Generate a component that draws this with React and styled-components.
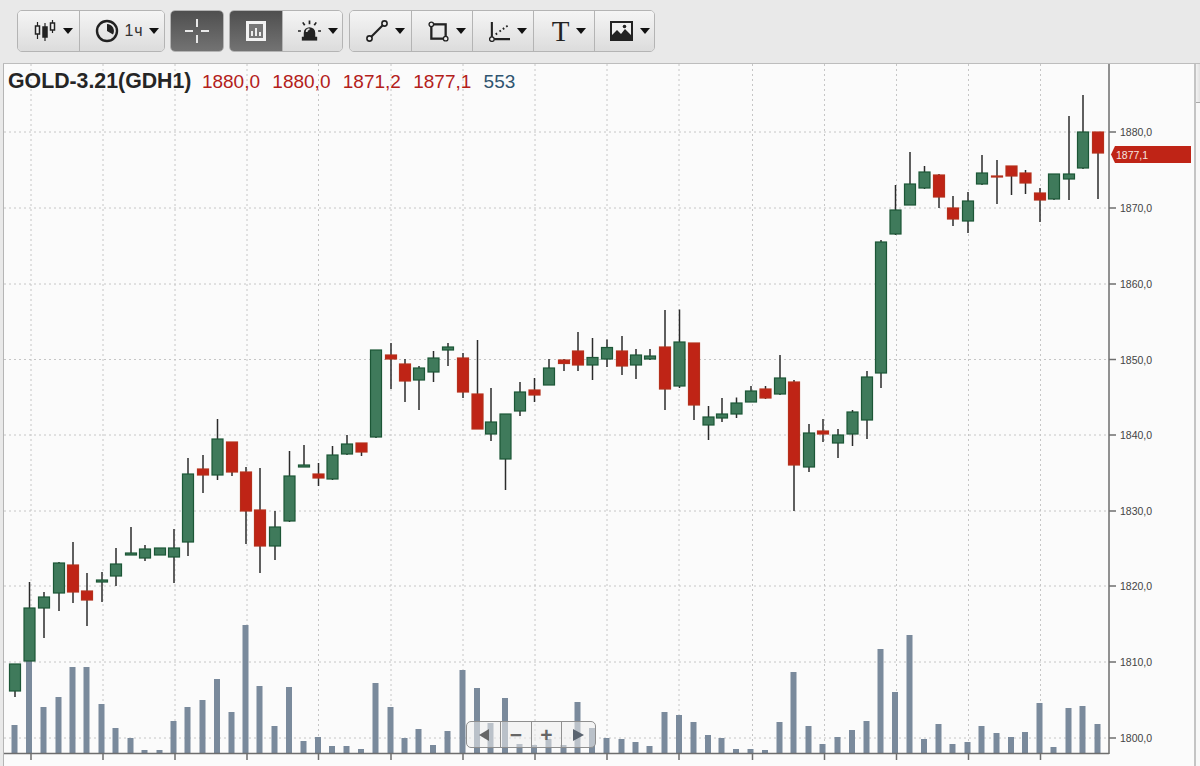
import styled, { createGlobalStyle } from "styled-components"

const GlobalStyle = createGlobalStyle`
  html, body { margin: 0; padding: 0; background: #e9e9e9; }
  body { font-family: "Liberation Sans", Arial, sans-serif; }
`

// x, wick top, wick bottom, body top, body bottom, up?
const candles = [
  [15, 664, 697, 664, 691, 1], [29.5, 582, 661, 608, 661, 1], [44, 592, 638, 597, 608, 1], [59, 562, 611, 563, 593, 1],
  [73, 542, 603, 565, 592, 0], [87, 573, 626, 591, 600, 0], [102, 572, 602, 580, 582, 1], [116, 548, 586, 564, 576, 1],
  [131, 527, 555, 553, 555, 1], [145, 545, 561, 549, 558, 1], [160, 548, 555, 548, 555, 1], [174, 529, 583, 548, 557, 1],
  [188, 458, 556, 474, 542, 1], [203, 455, 493, 469, 475, 0], [217.5, 419, 480, 439, 475, 1], [232, 442, 476, 442, 472, 0],
  [246, 467, 544, 472, 511, 0], [260, 468, 573, 510, 546, 0], [275, 511, 560, 527, 546, 1], [289.5, 451, 522, 476, 521, 1],
  [304, 445, 467, 465, 467, 1], [318.5, 463, 486, 474, 478, 0], [332.5, 446, 480, 455, 479, 1], [347, 435, 455, 444, 454, 1],
  [361.5, 443, 456, 443, 452, 0], [376, 350, 438, 350, 437, 1], [391, 343, 389, 355, 359, 0], [405, 359, 402, 364, 381, 0],
  [419, 366, 410, 368, 380, 1], [433.5, 351, 382, 358, 372, 1], [448, 343, 366, 347, 350, 1], [463, 353, 398, 358, 392, 0],
  [477.5, 340, 429, 394, 429, 0], [491, 388, 441, 422, 434, 1], [505.5, 414, 490, 414, 459, 1], [520, 382, 416, 392, 411, 1],
  [534.5, 378, 402, 390, 395, 0], [549, 359, 385, 368, 385, 1], [564, 359, 371, 360, 363.5, 0], [578, 332, 371, 351, 365, 0],
  [592.5, 338, 380, 357.5, 365, 1], [607, 339.5, 367, 347.5, 359, 1], [622, 336, 375, 351, 366, 0], [636, 349, 379, 355, 365, 1],
  [650, 349, 360, 356, 359, 1], [665, 310, 410, 347, 389, 0], [679.5, 309.5, 388, 342, 386, 1], [694, 343, 420, 343, 405, 0],
  [708.5, 406, 440, 417, 425, 1], [722, 398, 422, 414, 418, 1], [736.5, 397.5, 418, 403, 414, 1], [751, 386, 402, 391, 402, 1],
  [765.5, 386, 399, 389, 398, 0], [780, 355, 395, 378, 394, 1], [794, 380, 511, 382, 465, 0], [809, 424, 472, 433, 467, 1],
  [823, 419, 442, 431, 434, 0], [838, 429, 458, 435, 443, 1], [852.5, 410, 446, 412, 434, 1], [867, 371, 439, 377, 420, 1],
  [881, 240, 388, 242, 373, 1], [895.5, 185, 235, 210, 234, 1], [910, 152, 205, 184, 205, 1], [924.5, 166, 189, 172, 188, 1],
  [939, 174, 208, 175, 197, 0], [953, 196, 226, 208, 219, 0], [968, 192, 233, 201, 221, 1], [982, 155, 185, 173, 184, 1],
  [997, 160, 204, 176, 177, 0], [1011.5, 166, 195, 166, 176, 0], [1025.5, 170, 194, 173, 183, 0], [1040, 188, 222, 193, 200, 0],
  [1054, 174, 200, 174, 199, 1], [1069, 116, 200, 174, 179, 1], [1083, 95, 169, 132, 168, 1], [1098, 132, 199, 132, 153, 0],
]

const volumes = [
  725, 660, 707, 697, 667, 667, 704, 728, 738, 750, 750, 721, 707, 700, 679, 712, 625, 686, 726, 687,
  741, 737, 746, 746, 749, 683, 707, 738, 729, 745, 731, 670, 688, 723, 698, 744, 745, 739, 745, 702,
  728, 738, 739, 742, 746, 712, 715, 722, 735, 738, 749, 749, 750, 722, 672, 726, 744, 737, 730, 721,
  649, 692, 635, 739, 724, 744, 742, 726, 733, 737, 732, 703, 747, 708, 706, 724,
]

const priceLevels = [
  [132, "1880,0"], [208, "1870,0"], [284, "1860,0"], [359.5, "1850,0"], [435, "1840,0"],
  [511, "1830,0"], [586, "1820,0"], [662, "1810,0"], [738, "1800,0"],
]

const timeLines = [31, 103, 175, 247, 318.5, 391, 463, 535, 607, 679, 752.5, 824.5, 896.5, 968.5, 1040.5]

const Page = styled.div`
  width: 1200px;
  height: 766px;
  overflow: hidden;
  display: flex;
  flex-direction: column;
`
const Toolbar = styled.div`
  height: 63px;
  box-sizing: border-box;
  padding: 10px 0 0 17px;
  display: flex;
  align-items: flex-start;
  background: #e9e9e9;
`
const Group = styled.div`
  display: flex;
  height: 42px;
  box-sizing: border-box;
  margin-right: ${(p) => p.$gap || 5}px;
  border: 1px solid #b4b4b4;
  border-radius: 5px;
  overflow: hidden;
`
const ToolButton = styled.div`
  width: ${(p) => p.$w}px;
  box-sizing: border-box;
  padding-left: ${(p) => (p.$dark ? 0 : 10)}px;
  display: flex;
  align-items: center;
  justify-content: center;
  gap: ${(p) => p.$spread || 7}px;
  color: #333;
  background: ${(p) => (p.$dark
    ? "linear-gradient(#4f4f4f, #737373)"
    : "linear-gradient(#f5f5f5, #dcdcdc)")};
  & + & { border-left: 1px solid #b4b4b4; }
`
const Caret = styled.span`
  width: 0;
  height: 0;
  border-left: 5.5px solid transparent;
  border-right: 5.5px solid transparent;
  border-top: 6px solid #111;
`
const Period = styled.span`
  font-size: 16px;
  letter-spacing: 1px;
  color: #333;
`
const SerifT = styled.span`
  font-family: "Liberation Serif", serif;
  font-size: 29px;
  line-height: 30px;
  color: #222;
`
const Workspace = styled.div`
  flex: 1;
  display: flex;
  margin-left: 3px;
  border-top: 1px solid #bdbdbd;
`
const ChartPanel = styled.div`
  position: relative;
  width: 1190px;
  background: #fbfbfb;
  border-left: 1px solid #b5b5b5;
  border-right: 2px solid #c4c4c4;
`
const ChartSvg = styled.svg`
  display: block;
`
const Gutter = styled.div`
  flex: 1;
  background: #f8f8f8;
`
const GutterThumb = styled.div`
  height: 39px;
  box-sizing: border-box;
  background: linear-gradient(90deg, #f2f2f2, #e2e2e2);
  border-bottom: 1px solid #a8a8a8;
`
const Legend = styled.div`
  position: absolute;
  left: 4px;
  top: 6px;
  display: flex;
  align-items: baseline;
  font-size: 19px;
  line-height: 22px;
`
const Symbol = styled.span`
  font-weight: bold;
  font-size: 21.3px;
  color: #252525;
  margin-right: 10.5px;
`
const Quote = styled.span`
  color: ${(p) => p.$color || "#b3201a"};
  margin-right: 12.3px;
`
const Navigator = styled.div`
  position: absolute;
  left: 462px;
  top: 657px;
  width: 130px;
  height: 27px;
  box-sizing: border-box;
  display: flex;
  border: 1px solid #8f8f8f;
  border-radius: 5px;
  background: rgba(238, 238, 238, 0.55);
`
const NavCell = styled.div`
  width: ${(p) => p.$w}px;
  box-sizing: border-box;
  display: flex;
  align-items: center;
  justify-content: center;
  font-weight: bold;
  font-size: 21px;
  color: #666;
  & + & { border-left: 1px solid #8f8f8f; }
`
const ArrowLeft = styled.span`
  width: 0;
  height: 0;
  border-top: 6px solid transparent;
  border-bottom: 6px solid transparent;
  border-right: 10px solid #666;
`
const ArrowRight = styled.span`
  width: 0;
  height: 0;
  border-top: 6px solid transparent;
  border-bottom: 6px solid transparent;
  border-left: 11px solid #5a6470;
`

const CandlesIcon = () => (
  <svg width="22" height="22" viewBox="0 0 22 22" fill="none" stroke="#222">
    <path d="M3.500 2v17M11 3v18M18.500 0v13" strokeWidth="1.200" />
    <rect x="1.500" y="6" width="4" height="8" fill="#f2f2f2" strokeWidth="1.500" />
    <rect x="9" y="7" width="4" height="10" fill="#222" strokeWidth="1.500" />
    <rect x="16.500" y="3" width="4" height="7" fill="#f2f2f2" strokeWidth="1.500" />
  </svg>
)
const ClockIcon = () => (
  <svg width="24" height="24" viewBox="0 0 24 24" fill="none">
    <circle cx="12" cy="12" r="10" stroke="#222" strokeWidth="2.400" />
    <path d="M12 12V5a7 7 0 0 1 6 10.500z" fill="#222" />
  </svg>
)
const CrossIcon = () => (
  <svg width="24" height="24" viewBox="0 0 24 24" stroke="#e8e8e8" strokeWidth="2">
    <path d="M12 0v8M12 16v8M0 12h8M16 12h8" />
  </svg>
)
const BarsIcon = () => (
  <svg width="20" height="20" viewBox="0 0 20 20">
    <rect x="0" y="0" width="20" height="20" fill="#f2f2f2" />
    <rect x="3" y="3" width="14" height="14" fill="#777" />
    <path d="M5 15V10h2v5zM9 15V7h2v8zM13 15V11h2v4z" fill="#eee" />
  </svg>
)
const AlarmIcon = () => (
  <svg width="23" height="22" viewBox="0 0 24 22" fill="#222">
    <path d="M6 20V13a6 6 0 0 1 12 0v7z" />
    <rect x="4" y="17" width="16" height="4" />
    <path d="M9 12a3 3 0 0 1 3-3" stroke="#ddd" strokeWidth="1.800" fill="none" />
    <path d="M12 0v4M5 2l2 3M19 2l-2 3M0 11h3M21 11h3" stroke="#222" strokeWidth="1.800" />
  </svg>
)
const LineIcon = () => (
  <svg width="22" height="22" viewBox="0 0 22 22" fill="#eee" stroke="#222" strokeWidth="1.600">
    <path d="M4 18L18 4" strokeWidth="2.200" />
    <circle cx="3.500" cy="18.500" r="2.600" />
    <circle cx="18.500" cy="3.500" r="2.600" />
  </svg>
)
const RectIcon = () => (
  <svg width="21" height="21" viewBox="0 0 22 22" fill="none" stroke="#222" strokeWidth="2.400">
    <rect x="3.500" y="3.500" width="15" height="15" />
    <circle cx="3.500" cy="3.500" r="2.400" fill="#eee" strokeWidth="1.400" />
    <circle cx="18.500" cy="18.500" r="2.400" fill="#eee" strokeWidth="1.400" />
  </svg>
)
const FibIcon = () => (
  <svg width="21" height="21" viewBox="0 0 22 22" fill="none" stroke="#222">
    <path d="M3 1v17M5 19h17" strokeWidth="2.200" />
    <circle cx="3" cy="19" r="2.400" fill="#eee" strokeWidth="1.400" />
    <path d="M7 14l1.500-1M11 11l1.500-1M14.500 8.500L16 7.500M18 6l1.500-1" strokeWidth="2" />
  </svg>
)
const ImageIcon = () => (
  <svg width="23" height="20" viewBox="0 0 23 20">
    <rect x="0" y="0" width="23" height="20" fill="#222" />
    <rect x="2" y="2" width="19" height="12" fill="#eee" />
    <path d="M2 14l5-5 4 4 4-5 6 6v3H2z" fill="#222" />
    <circle cx="14.500" cy="5.500" r="1.800" fill="#222" />
  </svg>
)

const Candle = ({ c }) => {
  const [x, top, bottom, bodyTop, bodyBottom, up] = c
  const fill = up ? "#3f7a5b" : "#bf2416"
  const edge = up ? "#1c5636" : "#b5301c"
  return (
    <g>
      <line x1={x} x2={x} y1={top} y2={bottom} stroke="#2b2b2b" strokeWidth="1.500" />
      <rect x={x - 5.5} y={bodyTop} width="11" height={Math.max(bodyBottom - bodyTop, 1)} fill={fill} stroke={edge} strokeWidth="1.200" />
    </g>
  )
}

const PriceChart = () => (
  <ChartSvg width="1187" height="702" viewBox="4 64 1187 702">
    <g stroke="#c6c6c6" strokeWidth="1" strokeDasharray="2 3">
      {timeLines.map((x) => <line key={x} x1={x} x2={x} y1="64" y2="753" />)}
      {priceLevels.map(([y]) => <line key={y} x1="4" x2="1109" y1={y} y2={y} />)}
    </g>
    {volumes.map((top, i) => (
      <rect key={i} x={candles[i][0] - 3.5} y={top} width="6" height={753 - top} fill="#7a8a9c" />
    ))}
    {candles.map((c) => <Candle key={c[0]} c={c} />)}
    <g stroke="#6e6e6e" strokeWidth="1.500">
      <line x1="1109" x2="1109" y1="64" y2="754" />
      <line x1="4" x2="1109" y1="753.500" y2="753.500" />
      {timeLines.map((x) => <line key={x} x1={x} x2={x} y1="753" y2="760" />)}
      {priceLevels.map(([y]) => <line key={y} x1="1109" x2="1116" y1={y} y2={y} />)}
    </g>
    <g fontFamily="Liberation Sans, Arial, sans-serif" fontSize="10.500" fill="#444">
      {priceLevels.map(([y, label]) => <text key={y} x="1120" y={y + 4}>{label}</text>)}
    </g>
    <path d="M1115 146H1191V163H1115L1111 154.500Z" fill="#bf2416" />
    <text x="1116" y="158.500" fontFamily="Liberation Sans, Arial, sans-serif" fontSize="10.500" fill="#f6e6e0">1877,1</text>
  </ChartSvg>
)

const App = () => {
  return (
    <Page>
      <GlobalStyle />
      <Toolbar>
        <Group>
          <ToolButton $w={61}><CandlesIcon /><Caret /></ToolButton>
          <ToolButton $w={85} $spread={5}><ClockIcon /><Period>1ч</Period><Caret /></ToolButton>
        </Group>
        <Group>
          <ToolButton $w={52} $dark><CrossIcon /></ToolButton>
        </Group>
        <Group $gap={6}>
          <ToolButton $w={52} $dark><BarsIcon /></ToolButton>
          <ToolButton $w={60}><AlarmIcon /><Caret /></ToolButton>
        </Group>
        <Group>
          <ToolButton $w={61}><LineIcon /><Caret /></ToolButton>
          <ToolButton $w={61}><RectIcon /><Caret /></ToolButton>
          <ToolButton $w={61}><FibIcon /><Caret /></ToolButton>
          <ToolButton $w={61}><SerifT>T</SerifT><Caret /></ToolButton>
          <ToolButton $w={60}><ImageIcon /><Caret /></ToolButton>
        </Group>
      </Toolbar>
      <Workspace>
        <ChartPanel>
          <PriceChart />
          <Legend>
            <Symbol>GOLD-3.21(GDH1)</Symbol>
            <Quote>1880,0</Quote>
            <Quote>1880,0</Quote>
            <Quote>1871,2</Quote>
            <Quote>1877,1</Quote>
            <Quote $color="#2f5470">553</Quote>
          </Legend>
          <Navigator>
            <NavCell $w={33}><ArrowLeft /></NavCell>
            <NavCell $w={31}>−</NavCell>
            <NavCell $w={30}>+</NavCell>
            <NavCell $w={34}><ArrowRight /></NavCell>
          </Navigator>
        </ChartPanel>
        <Gutter>
          <GutterThumb />
        </Gutter>
      </Workspace>
    </Page>
  )
}

export default App
